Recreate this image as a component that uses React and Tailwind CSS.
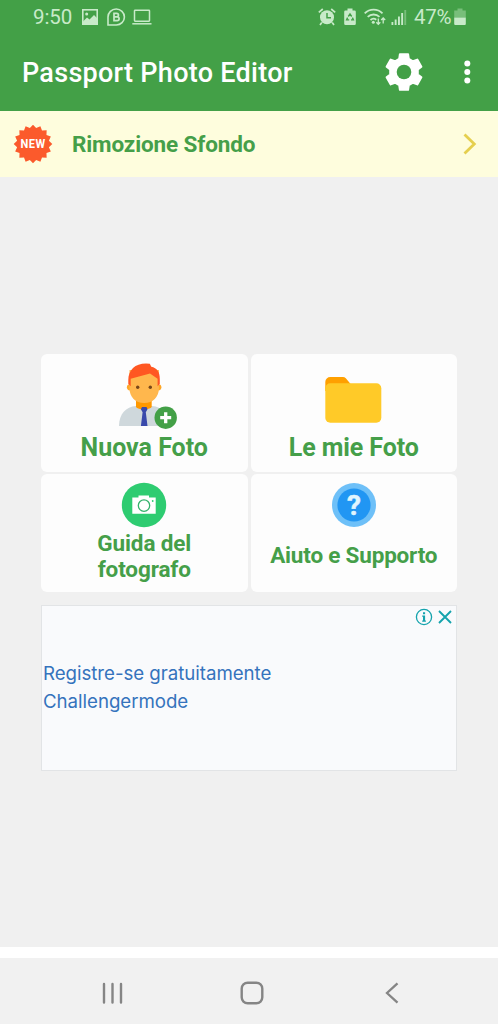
const starPoints = Array.from({ length: 32 }, (_, i) => {
  const angle = (i * Math.PI) / 16 - Math.PI / 2;
  const radius = i % 2 === 0 ? 19.3 : 16.2;
  return `${(20 + radius * Math.cos(angle)).toFixed(2)},${(20 + radius * Math.sin(angle)).toFixed(2)}`;
}).join(' ');

// six teeth, four corners each: [degrees from the tooth axis, radius]
const toothCorners = [[-20, 14], [-13, 18.2], [13, 18.2], [20, 14]];
const gearPoints = Array.from({ length: 6 }, (_, i) => i * 60 - 90)
  .flatMap((axis) =>
    toothCorners.map(([offset, radius]) => {
      const angle = ((axis + offset) * Math.PI) / 180;
      return `${(20 + radius * Math.cos(angle)).toFixed(2)},${(20 + radius * Math.sin(angle)).toFixed(2)}`;
    })
  )
  .join(' ');

function StatusBar() {
  return (
    <div className="flex h-[35px] items-center justify-between pl-[33px] pr-8 text-[#c8eac9]">
      <div className="flex items-center">
        <span className="w-[49px] text-[20.5px] leading-none tracking-[-0.1px]">9:50</span>
        <svg width="16" height="16" viewBox="0 0 16 16" className="-mt-px">
          <rect x="0.8" y="0.8" width="14.4" height="14.4" fill="none" stroke="currentColor" strokeWidth="1.6" />
          <circle cx="4.7" cy="5" r="1.5" fill="currentColor" />
          <path d="M1 12.5 5 8.5 7.5 10.5 12 6 15.5 9.5V15.5H1z" fill="currentColor" />
        </svg>
        <svg width="19" height="18" viewBox="0 0 19 18" className="-mt-px ml-[9px]" fill="none" stroke="currentColor" strokeWidth="1.6">
          <path d="M1 17V9A8.2 8 0 1 1 9.3 17z" />
          <path d="M7 5.3h2.7a1.7 1.7 0 0 1 0 3.5H7zM7 8.8h3.2a1.9 1.9 0 0 1 0 3.8H7z" strokeWidth="1.7" />
        </svg>
        <svg width="20" height="16" viewBox="0 0 20 16" className="-mt-px ml-[6px]" fill="none" stroke="currentColor" strokeWidth="1.5">
          <rect x="2.5" y="1.2" width="15" height="11" rx="0.6" />
          <path d="M0.3 14.8h19.2" />
        </svg>
      </div>
      <div className="flex items-center">
        <svg width="18" height="18" viewBox="0 0 18 18" className="-mt-[2px] mr-2">
          <circle cx="9" cy="9.2" r="7" fill="currentColor" />
          <path d="M0.8 4.4 4.8 1M17.2 4.4 13.2 1M3.8 14.6 2 17M14.2 14.6 16 17" stroke="currentColor" strokeWidth="1.7" />
          <path d="M9 5v4.7h4" fill="none" stroke="#43a047" strokeWidth="1.5" />
        </svg>
        <svg width="12" height="18" viewBox="0 0 12 18" className="-mt-[2px] mr-2">
          <path d="M3.5 0.5h5v2h2a1.3 1.3 0 0 1 1.3 1.3v12a1.3 1.3 0 0 1-1.3 1.3h-9A1.3 1.3 0 0 1 0.2 15.8v-12a1.3 1.3 0 0 1 1.3-1.3h2z" fill="currentColor" />
          <path d="M4.3 8.5 6 6l1.7 2.5M8.4 9.6l1 2.3H7M5.2 11.9H2.6l1-2.3" fill="none" stroke="#43a047" strokeWidth="1.4" />
        </svg>
        <svg width="23" height="18" viewBox="0 0 23 18" className="-mt-[2px] mr-1" fill="none" stroke="currentColor" strokeWidth="1.8">
          <path d="M0.7 5.3a12.8 12.8 0 0 1 17.8 0M3.7 8.8a8.7 8.7 0 0 1 11.8 0M6.5 12a4.5 4.5 0 0 1 5.8-0.2" />
          <circle cx="9.3" cy="14.2" r="1.5" fill="currentColor" stroke="none" />
          <path d="M14.3 10.5v5.5M12.3 14.3l2 2 2-2M19.2 15.5V10M17.2 12l2-2 2 2" strokeWidth="1.3" />
        </svg>
        <svg width="16" height="18" viewBox="0 0 16 18" className="-mt-px mr-[7px]" fill="currentColor">
          <path d="M0.5 14h1.8v3H0.5zM3.7 11.5h1.9V17H3.7zM7 8.5h1.9V17H7zM10.2 5h1.9v12h-1.9z" />
          <path d="M13.3 2h1.9v15h-1.9z" opacity="0.4" />
        </svg>
        <span className="w-[40px] text-[20.5px] leading-none tracking-[-0.3px]">47%</span>
        <svg width="12" height="18" viewBox="0 0 12 18" className="-mt-[2px]" fill="currentColor">
          <path d="M3.5 0.5h5v2h3.3V9.5H0.2V2.5h3.3z" opacity="0.4" />
          <path d="M0.2 9.5h11.6v6.5a1 1 0 0 1-1 1H1.2a1 1 0 0 1-1-1z" />
        </svg>
      </div>
    </div>
  );
}

function AppBar() {
  return (
    <div className="flex h-[76px] items-center pl-[22px] pr-[22px] text-white">
      <h1 className="mt-px flex-1 text-[27px] font-medium leading-none tracking-[0.28px]">Passport Photo Editor</h1>
      <button type="button" className="-mt-[2px] mr-[34px]">
        <svg width="40" height="40" viewBox="0 0 40 40">
          <polygon points={gearPoints} fill="currentColor" stroke="currentColor" strokeWidth="2" strokeLinejoin="round" />
          <circle cx="20" cy="20" r="7.3" fill="#43a047" />
        </svg>
      </button>
      <button type="button" className="-mt-[2px]">
        <svg width="18" height="26" viewBox="0 0 18 26" fill="currentColor">
          <circle cx="9.3" cy="4.5" r="3" />
          <circle cx="9.3" cy="13" r="3" />
          <circle cx="9.3" cy="21.5" r="3" />
        </svg>
      </button>
    </div>
  );
}

function Banner() {
  return (
    <div className="flex h-[66px] items-center bg-[#fefddd] pl-[13px] pr-[20px]">
      <svg width="40" height="40" viewBox="0 0 40 40">
        <polygon points={starPoints} fill="#fb5a2c" />
        <text
          x="7.5"
          y="24.4"
          textLength="25"
          lengthAdjust="spacingAndGlyphs"
          className="fill-white text-[13px] font-bold tracking-[0.5px]"
        >
          NEW
        </text>
      </svg>
      <span className="ml-[19px] flex-1 text-[22.5px] font-bold leading-none tracking-[-0.13px] text-[#459f49]">Rimozione Sfondo</span>
      <svg width="16" height="24" viewBox="0 0 16 24" fill="none" stroke="#e5cf4e" strokeWidth="2.8">
        <path d="M2.5 2.5 12.3 12 2.5 21.5" />
      </svg>
    </div>
  );
}

function PersonIcon() {
  return (
    <svg width="60" height="68" viewBox="0 0 60 68">
      <path d="M1 64C1 52 8 44.5 18 44h16c10 0.5 17 8 17 20z" fill="#cfd8dc" />
      <path d="M18 36h15.7v8.5a7.85 3 0 0 1-15.7 0z" fill="#ff9800" />
      <circle cx="12" cy="25.3" r="3.1" fill="#ffa726" />
      <circle cx="40.3" cy="25.3" r="3.1" fill="#ffa726" />
      <path d="M11.5 8h29.4v18.500c0 8.500-6 14.500-14.700 14.500s-14.700-6-14.700-14.500z" fill="#ffb74d" />
      <path d="M28 1.5C17 1.5 10.3 8 10.300 18v4l2.400 2.300v-7.600L32 11.500l7.600 5.200v7.600l2.200-2.300v-5c0-7-2.800-11-8.500-12.200L31.800 1.700z" fill="#ff5722" />
      <circle cx="19.7" cy="25.3" r="1.7" fill="#784719" />
      <circle cx="32.3" cy="25.3" r="1.7" fill="#784719" />
      <path d="M24 45h4.5l1 2.2-1.7 3 1.7 13.8h-6.6l1.7-13.8-1.7-3z" fill="#3949ab" />
      <circle cx="47.7" cy="55.7" r="11.2" fill="#43a047" />
      <path d="M47.7 50.2v11M42.2 55.7h11" stroke="#fff" strokeWidth="3.3" />
    </svg>
  );
}

function FolderIcon() {
  return (
    <svg width="57" height="46" viewBox="0 0 57 46">
      <path d="M0.3 14V5a5 5 0 0 1 5-5h12.5a4 4 0 0 1 3 1.3L26.5 8v6z" fill="#ffa000" />
      <rect x="0.3" y="6.3" width="56" height="39.4" rx="5" fill="#ffca28" />
    </svg>
  );
}

function CameraIcon() {
  return (
    <svg width="46" height="46" viewBox="0 0 46 46">
      <circle cx="23" cy="23" r="22.2" fill="#2ecc71" />
      <path d="M11.3 15.5h6.2v-2h10.5v2h6.7v16.3H11.3z" fill="#fff" />
      <circle cx="23" cy="23.6" r="5.7" fill="none" stroke="#35b36c" strokeWidth="1.3" />
      <circle cx="31.7" cy="19" r="0.9" fill="#2ecc71" />
    </svg>
  );
}

function HelpIcon() {
  return (
    <svg width="46" height="46" viewBox="0 0 46 46">
      <circle cx="23" cy="23" r="22" fill="#6ec0f8" />
      <circle cx="23" cy="23" r="16.6" fill="#2196f3" />
      <text x="23" y="33" textAnchor="middle" className="fill-[#e1f5fe] stroke-[#e1f5fe] stroke-[0.5px] text-[28px] font-bold">?</text>
    </svg>
  );
}

const cards = [
  { label: 'Nuova Foto', icon: <PersonIcon />, iconClass: 'mt-[8px] ml-[8px]', textClass: 'mt-[3px] text-[25px] leading-[30px]' },
  { label: 'Le mie Foto', icon: <FolderIcon />, iconClass: 'mt-[23px]', textClass: 'mt-[10px] text-[25px] leading-[30px] tracking-[-0.1px]' },
  { label: 'Guida del fotografo', icon: <CameraIcon />, iconClass: 'mt-[8px]', textClass: 'mt-[2px] w-[120px] text-[22.5px] leading-[26px] tracking-[-0.12px]' },
  { label: 'Aiuto e Supporto', icon: <HelpIcon />, iconClass: 'mt-[8px] ml-px', textClass: 'mt-[14px] text-[22.5px] leading-[26px] tracking-[-0.2px]' },
];

function AdBox() {
  return (
    <div className="mx-[41px] mt-[13px] h-[166px] border border-[#e2e4e6] bg-[#f9fafc]">
      <div className="flex h-[23px] items-center justify-end gap-[5px] pb-[2px] pr-[4px] text-[#15a3ad]">
        <svg width="18" height="18" viewBox="0 0 18 18">
          <circle cx="9" cy="9" r="7.6" fill="none" stroke="currentColor" strokeWidth="1.3" />
          <path d="M8 4.3h2.1v2H8zM7.2 7.5h2.9v5h0.8v1.3H7.2v-1.3H8V8.7h-0.8z" fill="currentColor" />
        </svg>
        <svg width="14" height="14" viewBox="0 0 14 14" stroke="currentColor" strokeWidth="1.9">
          <path d="M1 1 13 13M13 1 1 13" />
        </svg>
      </div>
      <p className="mt-[31px] w-[260px] pl-px font-['Inter',sans-serif] text-[18.7px] leading-[28px] tracking-[-0.04px] text-[#3573bd]">
        Registre-se gratuitamente
        <br />
        Challengermode
      </p>
    </div>
  );
}

function NavBar() {
  return (
    <div className="flex h-[66px] items-center justify-between bg-[#f1f1f1] pl-[101px] pr-[98px] text-[#858585]">
      <svg width="23" height="24" viewBox="0 0 23 24" className="mt-[3px]" stroke="currentColor" strokeWidth="2.4" strokeLinecap="round">
        <path d="M3 3v18.5M11.5 3v18.5M20 3v18.5" />
      </svg>
      <svg width="24" height="24" viewBox="0 0 24 24" className="mr-[5px] mt-[3px]" fill="none" stroke="currentColor" strokeWidth="2.4">
        <rect x="1.7" y="1.7" width="20.6" height="20.6" rx="6" />
      </svg>
      <svg width="16" height="24" viewBox="0 0 16 24" className="mt-[3px]" fill="none" stroke="currentColor" strokeWidth="2.3">
        <path d="M13.5 2.3 3 12 13.5 21.7" />
      </svg>
    </div>
  );
}

export default function App() {
  return (
    <div className="flex h-[1024px] w-[498px] flex-col overflow-hidden bg-[#f0f0f0] font-['Roboto',sans-serif]">
      <header className="bg-[#43a047]">
        <StatusBar />
        <AppBar />
      </header>
      <Banner />
      <main className="flex-1 pt-[177px]">
        <div className="mx-[41px] grid grid-cols-2 gap-x-[3px] gap-y-[2px]">
          {cards.map((card) => (
            <button
              key={card.label}
              type="button"
              className="flex h-[118px] flex-col items-center rounded-md bg-[#fdfdfd] font-bold text-[#459f49]"
            >
              <span className={card.iconClass}>{card.icon}</span>
              <span className={card.textClass}>{card.label}</span>
            </button>
          ))}
        </div>
        <AdBox />
      </main>
      <div className="h-[11px] bg-white" />
      <NavBar />
    </div>
  );
}
